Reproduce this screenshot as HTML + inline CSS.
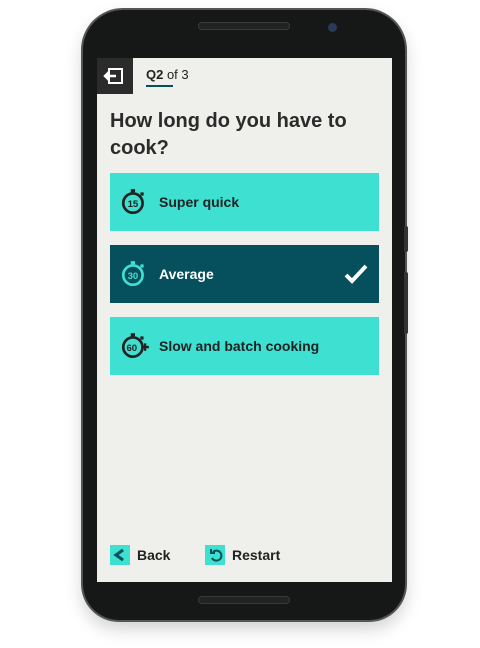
<!DOCTYPE html>
<html><head><style>
*{margin:0;padding:0;box-sizing:border-box}
body{width:480px;height:648px;background:#fff;position:relative;overflow:hidden;font-family:"Liberation Sans",sans-serif}
.phone{position:absolute;left:83px;top:10px;width:322px;height:610px;border-radius:40px 40px 36px 36px;background:#161818;box-shadow:0 0 0 2px #555,0 8px 18px rgba(0,0,0,.2)}
.btn{position:absolute;background:#333;width:4px;left:404px;border-radius:0 2px 2px 0}
.screen{position:absolute;left:97px;top:58px;width:295px;height:524px;background:#efefeb}
.spk{position:absolute;background:#222;border:1.5px solid #3a3a3a;border-radius:6px;height:8px}
.card{position:absolute;left:13px;width:269px;height:58px;background:#3ee0d2;color:#222;font-weight:bold;font-size:14px}
.card span{position:absolute;left:49px;top:21px}
.card svg{position:absolute;left:9px;top:14px}
.foot{position:absolute;top:487px;font-weight:bold;font-size:14px;color:#222}
.ic{position:absolute;width:20px;height:20px;background:#3ee0d2;top:0}
</style></head><body>
<div class="phone"></div>
<div class="btn" style="top:226px;height:26px"></div>
<div class="btn" style="top:272px;height:62px"></div>
<div class="spk" style="left:198px;top:22px;width:92px"></div>
<div style="position:absolute;left:328px;top:23px;width:9px;height:9px;border-radius:50%;background:#2a3a5a"></div>
<div class="spk" style="left:198px;top:596px;width:92px"></div>
<div class="screen">
 <div style="position:absolute;left:0;top:0;width:36px;height:36px;background:#2b2b2b">
  <svg width="36" height="36" viewBox="0 0 36 36"><rect x="12" y="11" width="13" height="14" fill="none" stroke="#fff" stroke-width="2"/><path d="M8 18h11M12 14l-4 4 4 4" stroke="#fff" stroke-width="2.4" fill="none"/></svg>
 </div>
 <div style="position:absolute;left:49px;top:9px;font-size:13px;color:#222"><b>Q2</b> of 3</div>
 <div style="position:absolute;left:49px;top:27px;width:27px;height:2px;background:#064f5c"></div>
 <div style="position:absolute;left:13px;top:50px;font-size:20px;font-weight:bold;color:#2b2b2b;line-height:27px">How long do you have to<br>cook?</div>
 <div class="card" style="top:115px"><svg width="30" height="30" viewBox="0 0 28 28"><circle cx="13" cy="15" r="9" fill="none" stroke="#222" stroke-width="2.5"/><rect x="11" y="2" width="4" height="3" fill="#222"/><rect x="20" y="5" width="3" height="3" fill="#222"/><text x="13" y="18.5" font-size="9" font-weight="bold" text-anchor="middle" fill="#222" font-family="Liberation Sans">15</text></svg><span>Super quick</span></div>
 <div class="card" style="top:187px;background:#064f5c;color:#fff"><svg width="30" height="30" viewBox="0 0 28 28"><circle cx="13" cy="15" r="9" fill="none" stroke="#3ee0d2" stroke-width="2.5"/><rect x="11" y="2" width="4" height="3" fill="#3ee0d2"/><rect x="20" y="5" width="3" height="3" fill="#3ee0d2"/><text x="13" y="18.5" font-size="9" font-weight="bold" text-anchor="middle" fill="#3ee0d2" font-family="Liberation Sans">30</text></svg><span>Average</span>
  <svg style="left:234px;top:18px" width="24" height="22" viewBox="0 0 24 22"><path d="M2 12l6 6L22 3" stroke="#fff" stroke-width="4" fill="none"/></svg></div>
 <div class="card" style="top:259px"><svg width="32" height="30" viewBox="0 0 30 28"><circle cx="13" cy="15" r="9" fill="none" stroke="#222" stroke-width="2.5"/><rect x="11" y="2" width="4" height="3" fill="#222"/><rect x="20" y="5" width="3" height="3" fill="#222"/><text x="12" y="18.5" font-size="9" font-weight="bold" text-anchor="middle" fill="#222" font-family="Liberation Sans">60</text><path d="M21 15h7M24.5 11.5v7" stroke="#222" stroke-width="2.2"/></svg><span>Slow and batch cooking</span></div>
 <div class="foot" style="left:13px"><div class="ic"><svg width="20" height="20"><path d="M13 5l-7 5 7 5" stroke="#064f5c" stroke-width="3" fill="none"/></svg></div><span style="position:absolute;left:27px;top:2px">Back</span></div>
 <div class="foot" style="left:108px"><div class="ic"><svg width="20" height="20"><path d="M8 7a5 5 0 1 1-1 6" stroke="#064f5c" stroke-width="2" fill="none"/><path d="M6 4v4h4" stroke="#064f5c" stroke-width="2" fill="none"/></svg></div><span style="position:absolute;left:27px;top:2px;white-space:nowrap">Restart</span></div>
</div>
</body></html>
